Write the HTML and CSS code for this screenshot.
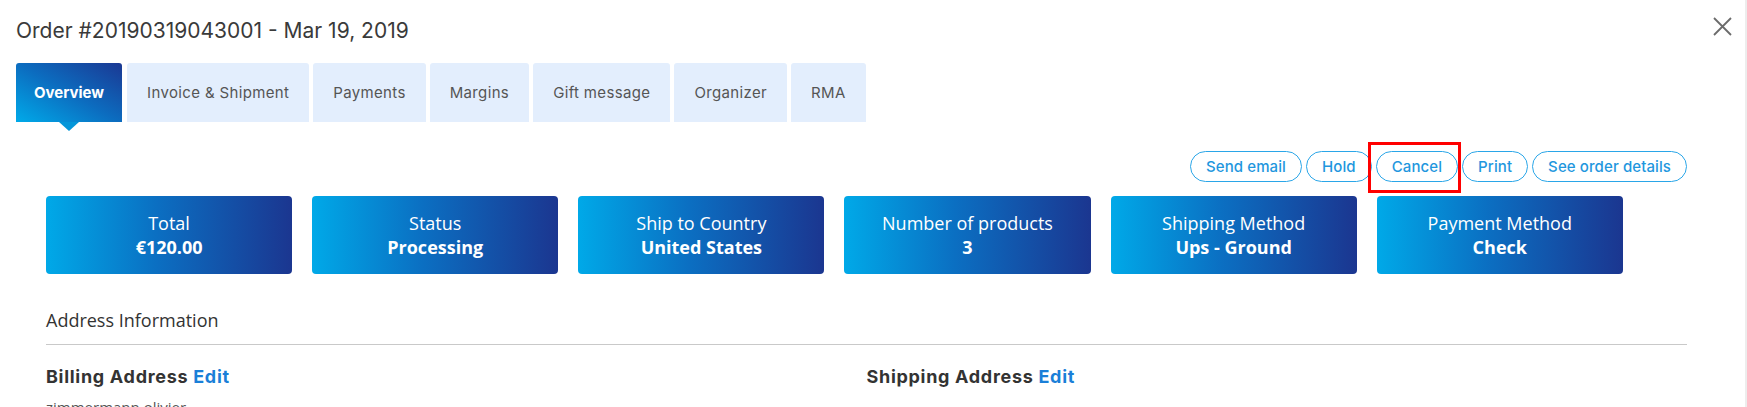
FILE: index.html
```html
<!DOCTYPE html>
<html lang="en">
<head>
<meta charset="utf-8">
<title>Order #20190319043001</title>
<link rel="stylesheet" href="styles.css">
</head>
<body>
<div class="modal">
  <header class="modal-head">
    <h1 class="title">Order #20190319043001 - Mar 19, 2019</h1>
    <button class="close" aria-label="Close">
      <svg width="19" height="19" viewBox="0 0 19 19"><path d="M1 1 L18 18 M18 1 L1 18" stroke="#6b6b6b" stroke-width="1.8" fill="none"/></svg>
    </button>
  </header>
  <nav class="tabs">
    <a class="tab active">Overview</a>
    <a class="tab">Invoice &amp; Shipment</a>
    <a class="tab">Payments</a>
    <a class="tab">Margins</a>
    <a class="tab">Gift message</a>
    <a class="tab">Organizer</a>
    <a class="tab">RMA</a>
  </nav>
  <section class="content">
    <div class="actions">
      <button class="pill">Send email</button>
      <button class="pill">Hold</button>
      <button class="pill marked">Cancel</button>
      <button class="pill">Print</button>
      <button class="pill">See order details</button>
    </div>
    <div class="stats">
      <div class="stat"><span class="stat-label">Total</span><strong class="stat-value">€120.00</strong></div>
      <div class="stat"><span class="stat-label">Status</span><strong class="stat-value">Processing</strong></div>
      <div class="stat"><span class="stat-label">Ship to Country</span><strong class="stat-value">United States</strong></div>
      <div class="stat"><span class="stat-label">Number of products</span><strong class="stat-value">3</strong></div>
      <div class="stat"><span class="stat-label">Shipping Method</span><strong class="stat-value">Ups - Ground</strong></div>
      <div class="stat"><span class="stat-label">Payment Method</span><strong class="stat-value">Check</strong></div>
    </div>
    <h2 class="section-title">Address Information</h2>
    <div class="addresses">
      <div class="address">
        <h3 class="address-title">Billing Address <a class="edit">Edit</a></h3>
        <p class="address-line">zimmermann olivier</p>
      </div>
      <div class="address">
        <h3 class="address-title">Shipping Address <a class="edit">Edit</a></h3>
      </div>
    </div>
  </section>
</div>
</body>
</html>
```
FILE: styles.css
```css
html, body {
  margin: 0;
  padding: 0;
  background: #fff;
  overflow: hidden;
}
body {
  font-family: "Inter", "Liberation Sans", sans-serif;
  color: #333;
}
.modal {
  height: 407px;
  overflow: hidden;
  border-right: 2px solid #ededed;
}
.modal-head {
  display: flex;
  justify-content: space-between;
  align-items: flex-start;
  padding: 17px 13px 0 16px;
}
.title {
  margin: 0;
  font-size: 21px;
  line-height: 28px;
  font-weight: 400;
  color: #3a3a3a;
}
.close {
  border: 0;
  background: none;
  padding: 0;
  margin-top: 0;
  width: 19px;
  height: 19px;
  cursor: pointer;
}
.close svg { display: block; }
.tabs {
  display: flex;
  gap: 4px;
  margin: 18px 0 0 16px;
}
.tab {
  position: relative;
  display: flex;
  align-items: center;
  height: 59px;
  padding: 0 20px;
  background: #e3eefd;
  color: #555;
  font-size: 15px;
  letter-spacing: 0.35px;
  border-radius: 3px 3px 0 0;
}
.tab.active {
  background: linear-gradient(30deg, #00aae9 0%, #0c6cbf 50%, #1b3893 100%);
  color: #fff;
  font-weight: 700;
  letter-spacing: 0;
  padding: 0 18px;
  margin-right: 1px;
}
.tab.active::after {
  content: "";
  position: absolute;
  left: 43px;
  top: 100%;
  border-left: 10px solid transparent;
  border-right: 10px solid transparent;
  border-top: 9px solid #0496d9;
}
.content {
  padding: 0 58px 0 46px;
}
.actions {
  display: flex;
  justify-content: flex-end;
  gap: 4px;
  margin-top: 29px;
}
.pill {
  position: relative;
  height: 31px;
  margin: 0;
  padding: 0 15px;
  border: 1px solid #2aa6e8;
  border-radius: 16px;
  background: #fff;
  color: #1f97de;
  font-family: "Inter", "Liberation Sans", sans-serif;
  font-size: 15px;
  letter-spacing: 0.1px;
  font-weight: 500;
}
.marked::after {
  content: "";
  position: absolute;
  left: -9px;
  right: -4px;
  top: -10px;
  bottom: -12px;
  border: 3px solid #f00;
  pointer-events: none;
}
.stats {
  display: flex;
  gap: 20px;
  margin-top: 14px;
}
.stat {
  width: 15%;
  height: 78px;
  box-sizing: border-box;
  padding: 15px 6px;
  display: flex;
  flex-direction: column;
  align-items: center;
  border-radius: 4px;
  background: linear-gradient(90deg, #00a9e8 0%, #0b6fc2 45%, #1b3690 100%);
  color: #fff;
  font-family: "Open Sans", "Liberation Sans", sans-serif;
  font-size: 18px;
  line-height: 24px;
}
.stat-value { font-weight: 700; }
.section-title {
  margin: 34px 0 0;
  padding-bottom: 12px;
  border-bottom: 1px solid #c9c9c9;
  font-family: "Open Sans", "Liberation Sans", sans-serif;
  font-size: 18px;
  line-height: 24px;
  font-weight: 400;
  color: #333;
}
.addresses {
  display: grid;
  grid-template-columns: 1fr 1fr;
  margin-top: 20px;
}
.address-title {
  margin: 0;
  font-size: 18px;
  letter-spacing: 0.7px;
  line-height: 24px;
  font-weight: 700;
  color: #333;
}
.edit {
  color: #1a7fd8;
}
.address-line {
  margin: 7px 0 0;
  font-family: "Open Sans", "Liberation Sans", sans-serif;
  font-size: 15px;
  line-height: 22px;
  color: #555;
}
```
